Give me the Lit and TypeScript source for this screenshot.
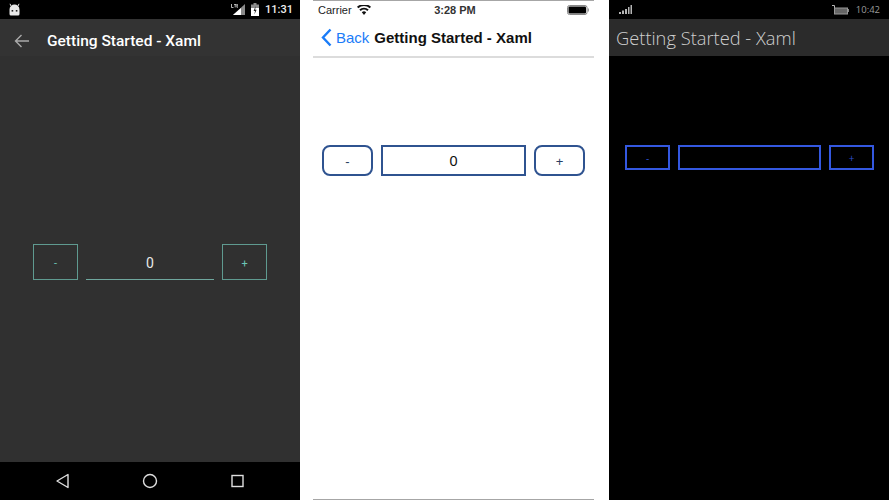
import {LitElement, html, css} from 'lit';
import {customElement} from 'lit/decorators.js';

@customElement('app-root')
export class AppRoot extends LitElement {

    static override styles = css`
        :host {
            display: flex;
            width: 889px;
            height: 500px;
            overflow: hidden;
            font-family: 'Roboto', 'Liberation Sans', sans-serif;
        }
        .phone {
            height: 500px;
            display: flex;
            flex-direction: column;
            box-sizing: border-box;
        }

        /* android */
        .android { width: 300px; background: #303030; }
        .a-status {
            height: 19px;
            background: #000;
            display: flex;
            align-items: center;
            padding: 0 7px 0 8px;
            color: #eee;
            font-size: 11px;
            font-weight: 500;
        }
        .a-status .time { margin-left: 6px; }
        .a-status .lte { margin-left: auto; display: block; }
        .a-status .batt { margin-left: 6px; display: block; }
        .a-bar {
            height: 37px;
            background: #333;
            display: flex;
            align-items: center;
            padding: 7px 0 0 14px;
            box-sizing: border-box;
            color: #fff;
            font-size: 15.5px;
            font-weight: 500;
        }
        .a-bar svg { display: block; margin-right: 18px; }
        .a-body {
            flex: 1;
            padding: 188px 33px 0;
            display: flex;
            align-items: flex-start;
            gap: 8px;
        }
        .a-btn {
            width: 45px;
            height: 36px;
            box-sizing: border-box;
            border: 1px solid #5f9a90;
            color: #6cc5b8;
            font-size: 11px;
            display: flex;
            align-items: center;
            justify-content: center;
            padding-top: 2px;
        }
        .a-entry {
            flex: 1;
            height: 36px;
            box-sizing: border-box;
            border-bottom: 1px solid #6fa79e;
            color: #e8e8e8;
            font-size: 14px;
            padding-top: 2px;
            display: flex;
            align-items: center;
            justify-content: center;
        }
        .a-nav {
            height: 38px;
            background: #000;
            display: flex;
            align-items: center;
            padding-bottom: 1px;
            box-sizing: border-box;
        }
        .a-nav svg { display: block; }

        /* ios */
        .ios {
            width: 309px;
            background: #fff;
            padding: 0 15px 0 13px;
            font-family: 'Liberation Sans', sans-serif;
            color: #000;
        }
        .i-frame {
            flex: 1;
            border-top: 1px solid #a6a6a6;
            border-bottom: 1px solid #a6a6a6;
            display: flex;
            flex-direction: column;
        }
        .i-status {
            height: 18px;
            display: flex;
            align-items: center;
            padding: 0 5px;
            font-size: 11px;
            color: #222;
            position: relative;
        }
        .i-status svg { display: block; }
        .i-status .wifi { margin-left: 5px; }
        .i-status .clock {
            position: absolute;
            left: 3px;
            right: 0;
            text-align: center;
            font-weight: 700;
            color: #333;
        }
        .i-status .cell { margin-left: auto; margin-right: 0; }
        .i-nav {
            height: 39px;
            box-sizing: border-box;
            border-bottom: 2px solid #dcdcdc;
            display: flex;
            align-items: center;
            padding: 0 0 1px 8px;
            font-size: 15px;
        }
        .i-nav svg { display: block; margin-right: 4px; }
        .i-nav .back { color: #1a7cf8; font-size: 15px; margin-right: 5px; }
        .i-nav .title { font-weight: 700; color: #111; }
        .i-body {
            flex: 1;
            padding: 87px 9px 0;
            display: flex;
            align-items: flex-start;
            gap: 8px;
        }
        .i-btn {
            width: 51px;
            height: 31px;
            box-sizing: border-box;
            border: 2px solid #2f5390;
            border-radius: 8px;
            color: #2a3f63;
            font-size: 13px;
            display: flex;
            align-items: center;
            justify-content: center;
            padding-top: 1px;
        }
        .i-entry {
            flex: 1;
            height: 31px;
            box-sizing: border-box;
            border: 2px solid #2f5390;
            color: #111;
            font-size: 14.5px;
            display: flex;
            align-items: center;
            justify-content: center;
        }

        /* windows */
        .win {
            width: 280px;
            background: #000;
            font-family: 'Open Sans', 'Liberation Sans', sans-serif;
        }
        .w-status {
            height: 19px;
            display: flex;
            align-items: center;
            padding: 0 9px 0 10px;
            color: #9a9a9a;
            font-size: 9.5px;
        }
        .w-status svg { display: block; }
        .w-status .wbatt { margin-left: auto; margin-right: 7px; }
        .w-bar {
            height: 37px;
            background: #2b2b2b;
            color: #cfcfcf;
            font-size: 18.3px;
            font-weight: 300;
            display: flex;
            align-items: center;
            padding: 0 0 0 7px;
            box-sizing: border-box;
        }
        .w-body {
            flex: 1;
            padding: 89px 15px 0 16px;
            display: flex;
            align-items: flex-start;
            gap: 8px;
        }
        .w-btn {
            width: 45px;
            height: 25px;
            box-sizing: border-box;
            border: 2px solid #3458e0;
            color: #2f4fd0;
            font-size: 10px;
            display: flex;
            align-items: center;
            justify-content: center;
        }
        .w-entry {
            flex: 1;
            height: 25px;
            box-sizing: border-box;
            border: 2px solid #3458e0;
        }
    `;

    override render() {
        return html`
        <div class="phone android">
            <div class="a-status">
                <svg width="14" height="14" viewBox="0 0 14 14">
                    <path d="M1.5 6.5a5 5 0 0 1 10 0v4.5a1.5 1.5 0 0 1-1.5 1.5H3A1.5 1.5 0 0 1 1.5 11z" fill="#e8e8e8"/>
                    <path d="M3 3 L2 .8M10 3l1-2.2" stroke="#e8e8e8" stroke-width="1"/>
                    <rect x="3.6" y="7" width="1.6" height="1.6" fill="#222"/>
                    <rect x="7.8" y="7" width="1.6" height="1.6" fill="#222"/>
                </svg>
                <svg class="lte" width="14" height="11" viewBox="0 0 14 11">
                    <path d="M14 0V11H2z" fill="#8a8a8a"/>
                    <path d="M10 4V11H2z" fill="#fff"/>
                    <rect x="0" y="0" width="7" height="4" fill="#000"/>
                    <path d="M.5 0v3.5h2M3 .4h2.4M4.2.4v3M6.8.3H5.9v3h1M5.9 1.8h1" stroke="#fff" stroke-width=".7" fill="none"/>
                </svg>
                <svg class="batt" width="8" height="13" viewBox="0 0 8 13">
                    <rect x="2.5" y="0" width="3" height="2" fill="#8a8a8a"/>
                    <rect x="0" y="1.5" width="8" height="4" fill="#8a8a8a"/>
                    <rect x="0" y="5" width="8" height="8" fill="#fff"/>
                    <path d="M4.6 3 2.6 8h1.4l-.6 3.4 2.2-4.6H4.2z" fill="#222"/>
                </svg>
                <span class="time">11:31</span>
            </div>
            <div class="a-bar">
                <svg width="15" height="14" viewBox="0 0 15 14" fill="none" stroke="#aaa" stroke-width="1.4">
                    <path d="M15 7H1.5M7.5 1 1.5 7l6 6"/>
                </svg>
                <span>Getting Started - Xaml</span>
            </div>
            <div class="a-body">
                <div class="a-btn">-</div>
                <div class="a-entry">0</div>
                <div class="a-btn">+</div>
            </div>
            <div class="a-nav">
                <svg width="300" height="20" viewBox="0 0 300 20" fill="none" stroke="#dedede" stroke-width="1.4">
                    <path d="M68 3.5V16.500L57 10z" stroke-linejoin="round"/>
                    <circle cx="150" cy="10" r="6.500"/>
                    <rect x="232" y="4.500" width="11" height="11"/>
                </svg>
            </div>
        </div>

        <div class="phone ios">
            <div class="i-frame">
                <div class="i-status">
                    <span>Carrier</span>
                    <svg class="wifi" width="14" height="10" viewBox="0 0 14 10">
                        <path d="M7 10 4.800 7.300a3.400 3.400 0 0 1 4.400 0zM3.700 6 2.300 4.400a7.200 7.200 0 0 1 9.400 0L10.300 6a5 5 0 0 0-6.600 0zM1.300 3.200 0 1.800a10.500 10.500 0 0 1 14 0l-1.300 1.400a8.600 8.600 0 0 0-11.400 0z" fill="#111"/>
                    </svg>
                    <span class="clock">3:28 PM</span>
                    <svg class="cell" width="22" height="10" viewBox="0 0 22 10">
                        <rect x=".5" y=".5" width="19.500" height="9" rx="2" fill="#fff" stroke="#888"/>
                        <rect x="1.500" y="1.500" width="17.500" height="7" rx="1" fill="#000"/>
                        <rect x="20.800" y="3.500" width="1" height="3" fill="#888"/>
                    </svg>
                </div>
                <div class="i-nav">
                    <svg width="11" height="19" viewBox="0 0 11 19" fill="none" stroke="#1a7cf8" stroke-width="2.400">
                        <path d="M9.500 1.500 2 9.500l7.500 8"/>
                    </svg>
                    <span class="back">Back</span>
                    <span class="title">Getting Started - Xaml</span>
                </div>
                <div class="i-body">
                    <div class="i-btn">-</div>
                    <div class="i-entry">0</div>
                    <div class="i-btn">+</div>
                </div>
            </div>
        </div>

        <div class="phone win">
            <div class="w-status">
                <svg width="14" height="9" viewBox="0 0 14 9" fill="#b5b5b5">
                    <rect x="0" y="7" width="2" height="2"/>
                    <rect x="3" y="5.500" width="2" height="3.500"/>
                    <rect x="6" y="4" width="2" height="5"/>
                    <rect x="9" y="2" width="1.500" height="7"/>
                    <rect x="11.500" y="0" width="1.500" height="9"/>
                </svg>
                <svg class="wbatt" width="17" height="11" viewBox="0 0 17 11">
                    <path d="M0 1.500h2.500v2.500" fill="none" stroke="#b5b5b5"/>
                    <rect x="2" y="3.500" width="14" height="7" fill="#999"/>
                    <rect x="3" y="4.500" width="12" height="5" fill="#666"/>
                    <rect x="16" y="5" width="1" height="3" fill="#888"/>
                </svg>
                <span>10:42</span>
            </div>
            <div class="w-bar">Getting Started - Xaml</div>
            <div class="w-body">
                <div class="w-btn">-</div>
                <div class="w-entry"></div>
                <div class="w-btn">+</div>
            </div>
        </div>
        `;
    }
}
